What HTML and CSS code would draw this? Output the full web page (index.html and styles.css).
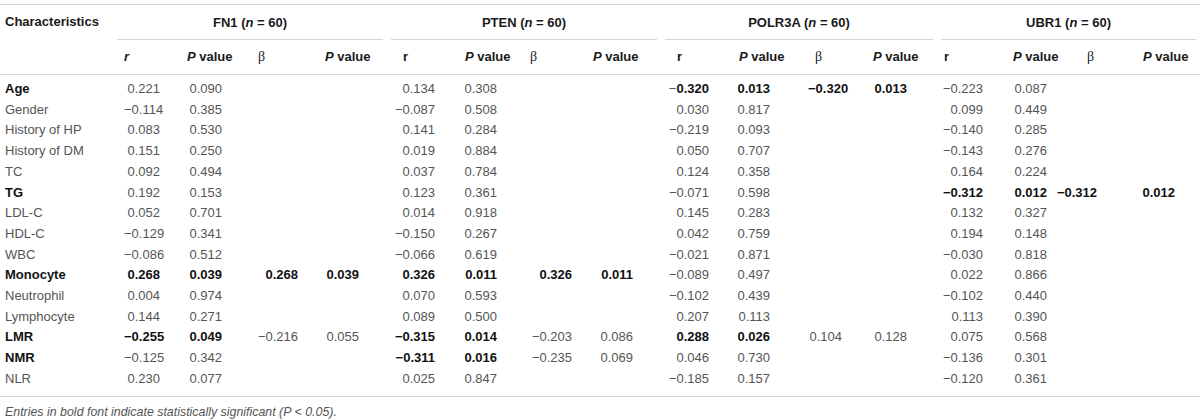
FILE: index.html
```html
<!DOCTYPE html>
<html lang="en">
<head>
<meta charset="utf-8">
<title>Correlation table</title>
<link rel="stylesheet" href="styles.css">
</head>
<body>
<div class="wrap">
<table class="tbl">
  <colgroup>
    <col class="w-char">
    <col class="w-67"><col class="w-70"><col class="w-68"><col class="w-69">
    <col class="w-71"><col class="w-65"><col class="w-63"><col class="w-75">
    <col class="w-71"><col class="w-76"><col class="w-58"><col class="w-71">
    <col class="w-69"><col class="w-49"><col class="w-81"><col class="w-64">
  </colgroup>
  <thead>
    <tr class="hr1">
      <th class="char">Characteristics</th>
      <th class="grp" colspan="4"><div class="grp-in">FN1 (<i>n</i> = 60)</div></th>
      <th class="grp" colspan="4"><div class="grp-in">PTEN (<i>n</i> = 60)</div></th>
      <th class="grp" colspan="4"><div class="grp-in">POLR3A (<i>n</i> = 60)</div></th>
      <th class="grp" colspan="4"><div class="grp-in">UBR1 (<i>n</i> = 60)</div></th>
    </tr>
    <tr class="hr2">
      <th></th>
      <th><i>r</i></th><th><i>P</i> value</th><th class="beta">β</th><th><i>P</i> value</th>
      <th>r</th><th><i>P</i> value</th><th class="beta">β</th><th><i>P</i> value</th>
      <th>r</th><th><i>P</i> value</th><th class="beta">β</th><th><i>P</i> value</th>
      <th>r</th><th><i>P</i> value</th><th class="beta">β</th><th><i>P</i> value</th>
    </tr>
  </thead>
  <tbody>
    <tr><td class="lbl"><b>Age</b></td>
      <td>0.221</td><td>0.090</td><td></td><td></td>
      <td>0.134</td><td>0.308</td><td></td><td></td>
      <td>&minus;<b>0.320</b></td><td><b>0.013</b></td><td><b>&minus;0.320</b></td><td><b>0.013</b></td>
      <td>&minus;0.223</td><td>0.087</td><td></td><td></td></tr>
    <tr><td class="lbl">Gender</td>
      <td>&minus;0.114</td><td>0.385</td><td></td><td></td>
      <td>&minus;0.087</td><td>0.508</td><td></td><td></td>
      <td>0.030</td><td>0.817</td><td></td><td></td>
      <td>0.099</td><td>0.449</td><td></td><td></td></tr>
    <tr><td class="lbl">History of HP</td>
      <td>0.083</td><td>0.530</td><td></td><td></td>
      <td>0.141</td><td>0.284</td><td></td><td></td>
      <td>&minus;0.219</td><td>0.093</td><td></td><td></td>
      <td>&minus;0.140</td><td>0.285</td><td></td><td></td></tr>
    <tr><td class="lbl">History of DM</td>
      <td>0.151</td><td>0.250</td><td></td><td></td>
      <td>0.019</td><td>0.884</td><td></td><td></td>
      <td>0.050</td><td>0.707</td><td></td><td></td>
      <td>&minus;0.143</td><td>0.276</td><td></td><td></td></tr>
    <tr><td class="lbl">TC</td>
      <td>0.092</td><td>0.494</td><td></td><td></td>
      <td>0.037</td><td>0.784</td><td></td><td></td>
      <td>0.124</td><td>0.358</td><td></td><td></td>
      <td>0.164</td><td>0.224</td><td></td><td></td></tr>
    <tr><td class="lbl"><b>TG</b></td>
      <td>0.192</td><td>0.153</td><td></td><td></td>
      <td>0.123</td><td>0.361</td><td></td><td></td>
      <td>&minus;0.071</td><td>0.598</td><td></td><td></td>
      <td><b>&minus;0.312</b></td><td><b>0.012</b></td><td><b>&minus;0.312</b></td><td><b>0.012</b></td></tr>
    <tr><td class="lbl">LDL-C</td>
      <td>0.052</td><td>0.701</td><td></td><td></td>
      <td>0.014</td><td>0.918</td><td></td><td></td>
      <td>0.145</td><td>0.283</td><td></td><td></td>
      <td>0.132</td><td>0.327</td><td></td><td></td></tr>
    <tr><td class="lbl">HDL-C</td>
      <td>&minus;0.129</td><td>0.341</td><td></td><td></td>
      <td>&minus;0.150</td><td>0.267</td><td></td><td></td>
      <td>0.042</td><td>0.759</td><td></td><td></td>
      <td>0.194</td><td>0.148</td><td></td><td></td></tr>
    <tr><td class="lbl">WBC</td>
      <td>&minus;0.086</td><td>0.512</td><td></td><td></td>
      <td>&minus;0.066</td><td>0.619</td><td></td><td></td>
      <td>&minus;0.021</td><td>0.871</td><td></td><td></td>
      <td>&minus;0.030</td><td>0.818</td><td></td><td></td></tr>
    <tr><td class="lbl"><b>Monocyte</b></td>
      <td><b>0.268</b></td><td><b>0.039</b></td><td><b>0.268</b></td><td><b>0.039</b></td>
      <td><b>0.326</b></td><td><b>0.011</b></td><td><b>0.326</b></td><td><b>0.011</b></td>
      <td>&minus;0.089</td><td>0.497</td><td></td><td></td>
      <td>0.022</td><td>0.866</td><td></td><td></td></tr>
    <tr><td class="lbl">Neutrophil</td>
      <td>0.004</td><td>0.974</td><td></td><td></td>
      <td>0.070</td><td>0.593</td><td></td><td></td>
      <td>&minus;0.102</td><td>0.439</td><td></td><td></td>
      <td>&minus;0.102</td><td>0.440</td><td></td><td></td></tr>
    <tr><td class="lbl">Lymphocyte</td>
      <td>0.144</td><td>0.271</td><td></td><td></td>
      <td>0.089</td><td>0.500</td><td></td><td></td>
      <td>0.207</td><td>0.113</td><td></td><td></td>
      <td>0.113</td><td>0.390</td><td></td><td></td></tr>
    <tr><td class="lbl"><b>LMR</b></td>
      <td><b>&minus;0.255</b></td><td><b>0.049</b></td><td>&minus;0.216</td><td>0.055</td>
      <td><b>&minus;0.315</b></td><td><b>0.014</b></td><td>&minus;0.203</td><td>0.086</td>
      <td><b>0.288</b></td><td><b>0.026</b></td><td>0.104</td><td>0.128</td>
      <td>0.075</td><td>0.568</td><td></td><td></td></tr>
    <tr><td class="lbl"><b>NMR</b></td>
      <td>&minus;0.125</td><td>0.342</td><td></td><td></td>
      <td><b>&minus;0.311</b></td><td><b>0.016</b></td><td>&minus;0.235</td><td>0.069</td>
      <td>0.046</td><td>0.730</td><td></td><td></td>
      <td>&minus;0.136</td><td>0.301</td><td></td><td></td></tr>
    <tr><td class="lbl">NLR</td>
      <td>0.230</td><td>0.077</td><td></td><td></td>
      <td>0.025</td><td>0.847</td><td></td><td></td>
      <td>&minus;0.185</td><td>0.157</td><td></td><td></td>
      <td>&minus;0.120</td><td>0.361</td><td></td><td></td></tr>
  </tbody>
</table>
<p class="note">Entries in bold font indicate statistically significant (P &lt; 0.05).</p>
</div>
</body>
</html>
```

FILE: styles.css
```css
html, body {
  margin: 0;
  padding: 0;
  background: #fff;
}

body {
  font-family: "Liberation Sans", Arial, Helvetica, sans-serif;
  font-size: 13px;
  color: #555;
}

.wrap {
  padding-top: 4px;
  width: 1200px;
}

.tbl {
  width: 1200px;
  table-layout: fixed;
  border-collapse: collapse;
  border-spacing: 0;
  border-top: 1px solid #d6d6d6;
  border-bottom: 1px solid #d6d6d6;
}

.w-char { width: 113px; }
.w-67 { width: 67px; }
.w-70 { width: 70px; }
.w-68 { width: 68px; }
.w-69 { width: 69px; }
.w-71 { width: 71px; }
.w-65 { width: 65px; }
.w-63 { width: 63px; }
.w-75 { width: 75px; }
.w-76 { width: 76px; }
.w-58 { width: 58px; }
.w-49 { width: 49px; }
.w-81 { width: 81px; }
.w-64 { width: 64px; }

th {
  font-weight: bold;
  color: #1a1a1a;
  text-align: left;
  white-space: nowrap;
  padding: 0;
}

th i { font-style: italic; }

.hr1 th {
  height: 35px;
  vertical-align: top;
}

.hr1 .char {
  padding-left: 5px;
  line-height: 32px;
  padding-top: 1px;
}

.hr1 .grp {
  padding: 0 4px;
}

.grp-in {
  text-align: center;
  line-height: 33px;
  border-bottom: 1px solid #d6d6d6;
  padding-top: 1px;
}

.hr2 th {
  height: 33px;
  line-height: 32px;
  border-bottom: 1px solid #d6d6d6;
  vertical-align: top;
}

.beta {
  font-family: "Liberation Serif", "Times New Roman", serif;
  font-weight: normal;
  font-size: 14px;
}

td {
  padding: 0;
  line-height: 20.7px;
  text-align: right;
  white-space: nowrap;
}

td b {
  color: #111;
}

td.lbl {
  text-align: left;
  padding-left: 5px;
  color: #555;
}

tbody tr:first-child td { padding-top: 4px; }
tbody tr:last-child td { padding-bottom: 6px; }

/* column offsets: header left inset / value right inset */
.hr2 th:nth-child(2), td:nth-child(2) { padding-left: 11px; }
td:nth-child(2) { padding-right: 20px; }
.hr2 th:nth-child(3), td:nth-child(3) { padding-left: 7px; }
td:nth-child(3) { padding-right: 28px; }
.hr2 th:nth-child(4) { padding-left: 8px; }
td:nth-child(4) { padding-right: 20px; }
.hr2 th:nth-child(5) { padding-left: 7px; }
td:nth-child(5) { padding-right: 28px; }

.hr2 th:nth-child(6) { padding-left: 16px; }
td:nth-child(6) { padding-right: 23px; }
.hr2 th:nth-child(7) { padding-left: 7px; }
td:nth-child(7) { padding-right: 26px; }
.hr2 th:nth-child(8) { padding-left: 7px; }
td:nth-child(8) { padding-right: 14px; }
.hr2 th:nth-child(9) { padding-left: 7px; }
td:nth-child(9) { padding-right: 28px; }

.hr2 th:nth-child(10) { padding-left: 16px; }
td:nth-child(10) { padding-right: 23px; }
.hr2 th:nth-child(11) { padding-left: 7px; }
td:nth-child(11) { padding-right: 38px; }
.hr2 th:nth-child(12) { padding-left: 7px; }
td:nth-child(12) { padding-right: 24px; }
.hr2 th:nth-child(13) { padding-left: 7px; }
td:nth-child(13) { padding-right: 30px; }

.hr2 th:nth-child(14) { padding-left: 7px; }
td:nth-child(14) { padding-right: 23px; }
.hr2 th:nth-child(15) { padding-left: 7px; }
td:nth-child(15) { padding-right: 8px; }
.hr2 th:nth-child(16) { padding-left: 32px; }
td:nth-child(16) { padding-right: 39px; }
.hr2 th:nth-child(17) { padding-left: 7px; }
td:nth-child(17) { padding-right: 25px; }

.note {
  margin: 0;
  padding: 8px 0 0 5px;
  font-size: 12.4px;
  line-height: 15px;
  font-style: italic;
  color: #555;
}
```
